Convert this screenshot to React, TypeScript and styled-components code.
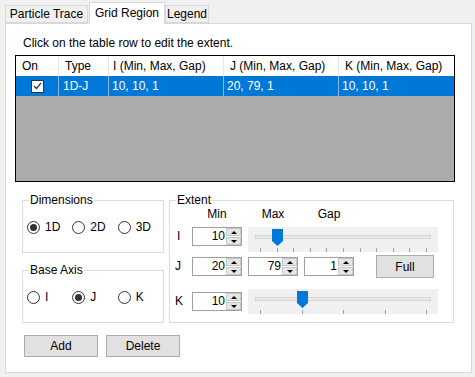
import React from 'react';
import styled, { createGlobalStyle } from 'styled-components';

const GlobalStyle = createGlobalStyle`
  html, body {
    margin: 0;
    padding: 0;
    background: #f0f0f0;
  }
  body {
    font-family: 'Liberation Sans', Arial, sans-serif;
    font-size: 12px;
    color: #000;
  }
`;

const Window = styled.div`
  width: 475px;
  height: 377px;
  box-sizing: border-box;
  padding: 2px 0 0 5px;
  overflow: hidden;
`;

const TabBar = styled.div`
  display: flex;
  align-items: flex-end;
  height: 21px;
`;

const Tab = styled.div<{ $active?: boolean; $width: number }>`
  box-sizing: border-box;
  width: ${({ $width }) => $width}px;
  height: ${({ $active }) => ($active ? 22 : 18)}px;
  margin-bottom: ${({ $active }) => ($active ? -1 : 0)}px;
  margin-left: ${({ $active }) => ($active ? 1 : 0)}px;
  border: 1px solid #d9d9d9;
  border-bottom: ${({ $active }) => ($active ? 'none' : '1px solid #d9d9d9')};
  background: ${({ $active }) => ($active ? '#fff' : '#f0f0f0')};
  position: relative;
  z-index: ${({ $active }) => ($active ? 1 : 0)};
  display: flex;
  align-items: center;
  justify-content: center;
  padding-bottom: ${({ $active }) => ($active ? 2 : 0)}px;
  white-space: nowrap;
`;

const Panel = styled.div`
  box-sizing: border-box;
  width: 467px;
  height: 350px;
  border: 1px solid #d9d9d9;
  background: #fff;
`;

const Hint = styled.div`
  margin: 12px 0 0 17px;
  line-height: 14px;
`;

const TableBox = styled.div`
  box-sizing: border-box;
  width: 440px;
  height: 127px;
  margin: 5px 0 0 9px;
  border: 1px solid #000;
  background: #ababab;
`;

const TableRow = styled.div<{ $selected?: boolean }>`
  display: grid;
  grid-template-columns: 43px 50px 115px 115px 115px;
  height: 20px;
  background: ${({ $selected }) => ($selected ? '#0078d7' : '#fff')};
  color: ${({ $selected }) => ($selected ? '#fff' : '#000')};
`;

const Cell = styled.div<{ $pad: number; $line: string; $center?: boolean }>`
  box-sizing: border-box;
  padding-left: ${({ $pad }) => $pad}px;
  border-right: 1px solid ${({ $line }) => $line};
  line-height: 20px;
  white-space: nowrap;
  overflow: hidden;
  display: flex;
  align-items: center;
  justify-content: ${({ $center }) => ($center ? 'center' : 'flex-start')};
  &:last-child {
    border-right: none;
  }
`;

const CheckBox = styled.div`
  box-sizing: border-box;
  width: 13px;
  height: 13px;
  border: 1px solid #333;
  background: #fff;
  display: flex;
  align-items: center;
  justify-content: center;
`;

const Bottom = styled.div`
  display: flex;
  gap: 5px;
  margin-top: 11px;
  padding-left: 16px;
`;

const LeftColumn = styled.div`
  width: 142px;
  flex-shrink: 0;
  display: flex;
  flex-direction: column;
`;

const Group = styled.fieldset<{ $width: number; $height: number; $top?: number }>`
  box-sizing: border-box;
  width: ${({ $width }) => $width}px;
  height: ${({ $height }) => $height}px;
  margin: ${({ $top = 0 }) => $top}px 0 0 0;
  padding: 0;
  min-width: 0;
  border: 1px solid #dcdcdc;
`;

const Legend = styled.legend`
  margin-left: 6px;
  padding: 0 1px;
  line-height: 14px;
  font-size: 12px;
`;

const RadioRow = styled.div`
  display: flex;
  margin-top: 13px;
  padding-left: 4px;
`;

const RadioItem = styled.label`
  width: 46px;
  display: flex;
  align-items: center;
  line-height: 14px;
`;

const RadioCircle = styled.span<{ $checked?: boolean }>`
  box-sizing: border-box;
  width: 13px;
  height: 13px;
  margin-right: 5px;
  border-radius: 50%;
  border: 1px solid #333;
  background: #fff;
  display: flex;
  align-items: center;
  justify-content: center;
  &::after {
    content: '';
    width: 7px;
    height: 7px;
    border-radius: 50%;
    background: ${({ $checked }) => ($checked ? '#333' : 'transparent')};
  }
`;

const ButtonRow = styled.div`
  display: flex;
  gap: 8px;
  margin-top: 12px;
  padding-left: 2px;
`;

const Button = styled.button<{ $width: number; $height: number; $left?: number }>`
  box-sizing: border-box;
  flex-shrink: 0;
  width: ${({ $width }) => $width}px;
  height: ${({ $height }) => $height}px;
  margin: 0 0 0 ${({ $left = 0 }) => $left}px;
  padding: 0;
  border: 1px solid #adadad;
  background: #e1e1e1;
  font-family: inherit;
  font-size: 12px;
  color: #000;
`;

const HeadRow = styled.div`
  display: flex;
  padding-left: 22px;
  line-height: 14px;
`;

const HeadCell = styled.div`
  width: 50px;
  margin-right: 6px;
  text-align: center;
`;

const ExtentRow = styled.div<{ $height: number; $top: number; $align: string }>`
  display: flex;
  align-items: ${({ $align }) => $align};
  height: ${({ $height }) => $height}px;
  margin-top: ${({ $top }) => $top}px;
`;

const AxisLabel = styled.div<{ $pad: number }>`
  box-sizing: border-box;
  width: 22px;
  padding-left: ${({ $pad }) => $pad}px;
  line-height: 19px;
`;

const SpinBox = styled.div`
  box-sizing: border-box;
  width: 50px;
  height: 19px;
  margin-right: 6px;
  border: 1px solid #a0a0a0;
  background: #fff;
  display: flex;
  flex-shrink: 0;
`;

const SpinValue = styled.div`
  flex: 1;
  text-align: right;
  padding-right: 1px;
  line-height: 17px;
`;

const Spinner = styled.div`
  width: 15px;
  display: flex;
  flex-direction: column;
  gap: 1px;
  background: #fff;
`;

const SpinButton = styled.div`
  flex: 1;
  background: #e5e5e5;
  border: 1px solid #c8c8c8;
  box-sizing: border-box;
  display: flex;
  align-items: center;
  justify-content: center;
`;

const Arrow = styled.span<{ $down?: boolean }>`
  width: 0;
  height: 0;
  border-left: 3px solid transparent;
  border-right: 3px solid transparent;
  ${({ $down }) => ($down ? 'border-top: 3px solid #000;' : 'border-bottom: 3px solid #000;')}
`;

const Slider = styled.div`
  position: relative;
  width: 190px;
  height: 25px;
  background: #f0f0f0;
  flex-shrink: 0;
`;

const Track = styled.div`
  position: absolute;
  left: 7px;
  right: 7px;
  top: 8px;
  height: 4px;
  box-sizing: border-box;
  border: 1px solid #d6d6d6;
  background: #e7eaea;
`;

const Ticks = styled.div`
  position: absolute;
  left: 12px;
  right: 11px;
  top: 21px;
  height: 4px;
  display: flex;
  justify-content: space-between;
`;

const Tick = styled.span`
  width: 1px;
  height: 4px;
  background: #a0a0a0;
`;

const Thumb = styled.svg<{ $left: number }>`
  position: absolute;
  top: 2px;
  left: ${({ $left }) => $left}px;
`;

function Spin({ value }: { value: string }) {
  return (
    <SpinBox>
      <SpinValue>{value}</SpinValue>
      <Spinner>
        <SpinButton>
          <Arrow />
        </SpinButton>
        <SpinButton>
          <Arrow $down />
        </SpinButton>
      </Spinner>
    </SpinBox>
  );
}

function TrackBar({ ticks, value }: { ticks: number; value: number }) {
  const left = 12 + (value / ticks) * 166 - 5;
  return (
    <Slider>
      <Track />
      <Ticks>
        {Array.from({ length: ticks + 1 }).map((_, i) => (
          <Tick key={i} />
        ))}
      </Ticks>
      <Thumb $left={left} width="11" height="17" viewBox="0 0 11 17">
        <polygon points="0,0 11,0 11,12 5.5,17 0,12" fill="#0078d7" />
      </Thumb>
    </Slider>
  );
}

function Radio({ label, checked }: { label: string; checked?: boolean }) {
  return (
    <RadioItem>
      <RadioCircle $checked={checked} />
      {label}
    </RadioItem>
  );
}

const columns = ['On', 'Type', 'I (Min, Max, Gap)', 'J (Min, Max, Gap)', 'K (Min, Max, Gap)'];

export default function App() {
  return (
    <>
      <GlobalStyle />
      <Window>
        <TabBar>
          <Tab $width={83}>Particle Trace</Tab>
          <Tab $width={76} $active>
            Grid Region
          </Tab>
          <Tab $width={44}>Legend</Tab>
        </TabBar>
        <Panel>
          <Hint>Click on the table row to edit the extent.</Hint>
          <TableBox>
            <TableRow>
              {columns.map((c, i) => (
                <Cell key={c} $pad={i === 2 ? 4 : 6} $line="#e5e5e5">
                  {c}
                </Cell>
              ))}
            </TableRow>
            <TableRow $selected>
              <Cell $pad={0} $line="#8ab8e2" $center>
                <CheckBox>
                  <svg width="9" height="8" viewBox="0 0 9 8">
                    <polyline points="1,4 3.5,6.5 8,1" fill="none" stroke="#333" strokeWidth="1.2" />
                  </svg>
                </CheckBox>
              </Cell>
              <Cell $pad={4} $line="#8ab8e2">1D-J</Cell>
              <Cell $pad={3} $line="#8ab8e2">10, 10, 1</Cell>
              <Cell $pad={3} $line="#8ab8e2">20, 79, 1</Cell>
              <Cell $pad={3} $line="#8ab8e2">10, 10, 1</Cell>
            </TableRow>
          </TableBox>
          <Bottom>
            <LeftColumn>
              <Group $width={142} $height={60}>
                <Legend>Dimensions</Legend>
                <RadioRow>
                  <Radio label="1D" checked />
                  <Radio label="2D" />
                  <Radio label="3D" />
                </RadioRow>
              </Group>
              <Group $width={142} $height={60} $top={10}>
                <Legend>Base Axis</Legend>
                <RadioRow>
                  <Radio label="I" />
                  <Radio label="J" checked />
                  <Radio label="K" />
                </RadioRow>
              </Group>
              <ButtonRow>
                <Button $width={74} $height={22}>Add</Button>
                <Button $width={74} $height={22}>Delete</Button>
              </ButtonRow>
            </LeftColumn>
            <Group $width={285} $height={130}>
              <Legend>Extent</Legend>
              <HeadRow>
                <HeadCell>Min</HeadCell>
                <HeadCell>Max</HeadCell>
                <HeadCell>Gap</HeadCell>
              </HeadRow>
              <ExtentRow $height={26} $top={6} $align="flex-start">
                <AxisLabel $pad={7}>I</AxisLabel>
                <Spin value="10" />
                <TrackBar ticks={10} value={1} />
              </ExtentRow>
              <ExtentRow $height={23} $top={2} $align="center">
                <AxisLabel $pad={5}>J</AxisLabel>
                <Spin value="20" />
                <Spin value="79" />
                <Spin value="1" />
                <Button $width={58} $height={23} $left={16}>
                  Full
                </Button>
              </ExtentRow>
              <ExtentRow $height={25} $top={11} $align="center">
                <AxisLabel $pad={5}>K</AxisLabel>
                <Spin value="10" />
                <TrackBar ticks={4} value={1} />
              </ExtentRow>
            </Group>
          </Bottom>
        </Panel>
      </Window>
    </>
  );
}
